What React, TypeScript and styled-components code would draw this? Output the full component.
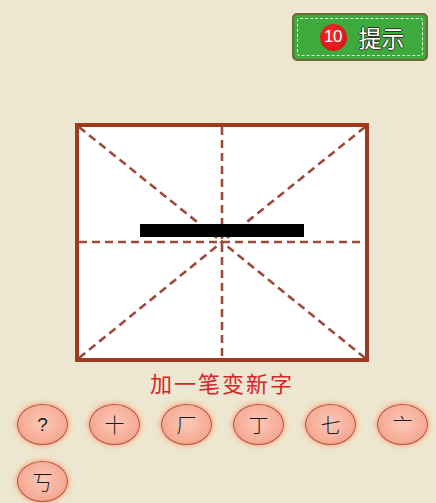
import React from "react";
import styled, { createGlobalStyle } from "styled-components";

const Global = createGlobalStyle`
  html, body { margin: 0; padding: 0; background: #ede7d1; }
  body { font-family: "Noto Sans CJK SC", "Noto Sans", sans-serif; }
`;

const Page = styled.div`
  width: 436px;
  height: 503px;
  overflow: hidden;
  display: flex;
  flex-direction: column;
  background: #ede7d1;
`;

const TopBar = styled.div`
  display: flex;
  justify-content: flex-end;
  padding: 13px 8px 0 0;
`;

const HintButton = styled.div`
  box-sizing: border-box;
  width: 136px;
  height: 48px;
  border-radius: 5px;
  border: 2px solid #6f6a35;
  background: #3eaa3e;
  padding: 3px;
  display: flex;
`;

const HintInner = styled.div`
  flex: 1;
  border: 1.5px dashed #e8f5e0;
  border-radius: 3px;
  display: flex;
  align-items: center;
  justify-content: center;
  gap: 12px;
  padding-left: 4px;
`;

const Badge = styled.div`
  width: 27px;
  height: 27px;
  border-radius: 50%;
  background: radial-gradient(circle at 40% 35%, #f02a2a, #d20f14);
  color: #fff;
  font-family: "Liberation Sans", Arial, sans-serif;
  font-size: 17px;
  display: flex;
  align-items: center;
  justify-content: center;
  letter-spacing: -0.5px;
`;

const HintLabel = styled.span`
  color: #fff;
  font-size: 23px;
  font-weight: 400;
  line-height: 1;
  text-shadow: 0 0 1px #2d3a20, 1px 0 0 #2d3a20, -1px 0 0 #2d3a20, 0 1px 0 #2d3a20, 0 -1px 0 #2d3a20;
`;

const Frame = styled.div`
  box-sizing: border-box;
  margin: 62px 0 0 75px;
  width: 294px;
  height: 239px;
  border: 4px solid #9f3a1e;
  background: #fff;
`;

const GridSvg = styled.svg`
  display: block;
  width: 100%;
  height: 100%;
`;

const Title = styled.div`
  margin-top: 7px;
  text-align: center;
  color: #d62529;
  font-size: 22px;
  line-height: 26px;
  letter-spacing: 2px;
  padding-left: 8px;
`;

const Options = styled.div`
  display: grid;
  grid-template-columns: repeat(6, 51px);
  column-gap: 21px;
  row-gap: 16px;
  padding: 9px 0 0 17px;
`;

const Option = styled.div`
  box-sizing: border-box;
  width: 51px;
  height: 41px;
  border-radius: 50%;
  border: 1.5px solid #b0533d;
  background: radial-gradient(ellipse at 50% 45%, #fbc9b8 0%, #f6ad98 60%, #ee9580 100%);
  box-shadow: 0 0 0 2px #f6c5a8, 0 0 5px 3px #f3cfae;
  display: flex;
  align-items: center;
  justify-content: center;
  color: #1a1a1a;
  font-size: 20px;
  font-weight: 300;
  line-height: 1;
`;

const QMark = styled.span`
  font-family: "Liberation Sans", Arial, sans-serif;
  font-size: 19px;
`;

const options = ["?", "十", "厂", "丁", "七", "亠", "丂"];

function Grid() {
  const w = 286;
  const h = 231;
  const cx = 143;
  const cy = 115;
  const dash = { stroke: "#9c4a3b", strokeWidth: 2.6, strokeDasharray: "8 5", fill: "none" };
  return (
    <GridSvg viewBox={`0 0 ${w} ${h}`}>
      <line x1={0} y1={cy} x2={w} y2={cy} {...dash} />
      <line x1={cx} y1={0} x2={cx} y2={h} {...dash} />
      <line x1={0} y1={0} x2={cx} y2={cy} {...dash} />
      <line x1={w} y1={0} x2={cx} y2={cy} {...dash} />
      <line x1={0} y1={h} x2={cx} y2={cy} {...dash} />
      <line x1={w} y1={h} x2={cx} y2={cy} {...dash} />
      <rect x={61} y={97} width={164} height={13} fill="#000" />
    </GridSvg>
  );
}

export default function App() {
  return (
    <>
      <Global />
      <Page>
        <TopBar>
          <HintButton>
            <HintInner>
              <Badge>10</Badge>
              <HintLabel>提示</HintLabel>
            </HintInner>
          </HintButton>
        </TopBar>
        <Frame>
          <Grid />
        </Frame>
        <Title>加一笔变新字</Title>
        <Options>
          {options.map((o, i) => (
            <Option key={i}>{o === "?" ? <QMark>?</QMark> : o}</Option>
          ))}
        </Options>
      </Page>
    </>
  );
}
